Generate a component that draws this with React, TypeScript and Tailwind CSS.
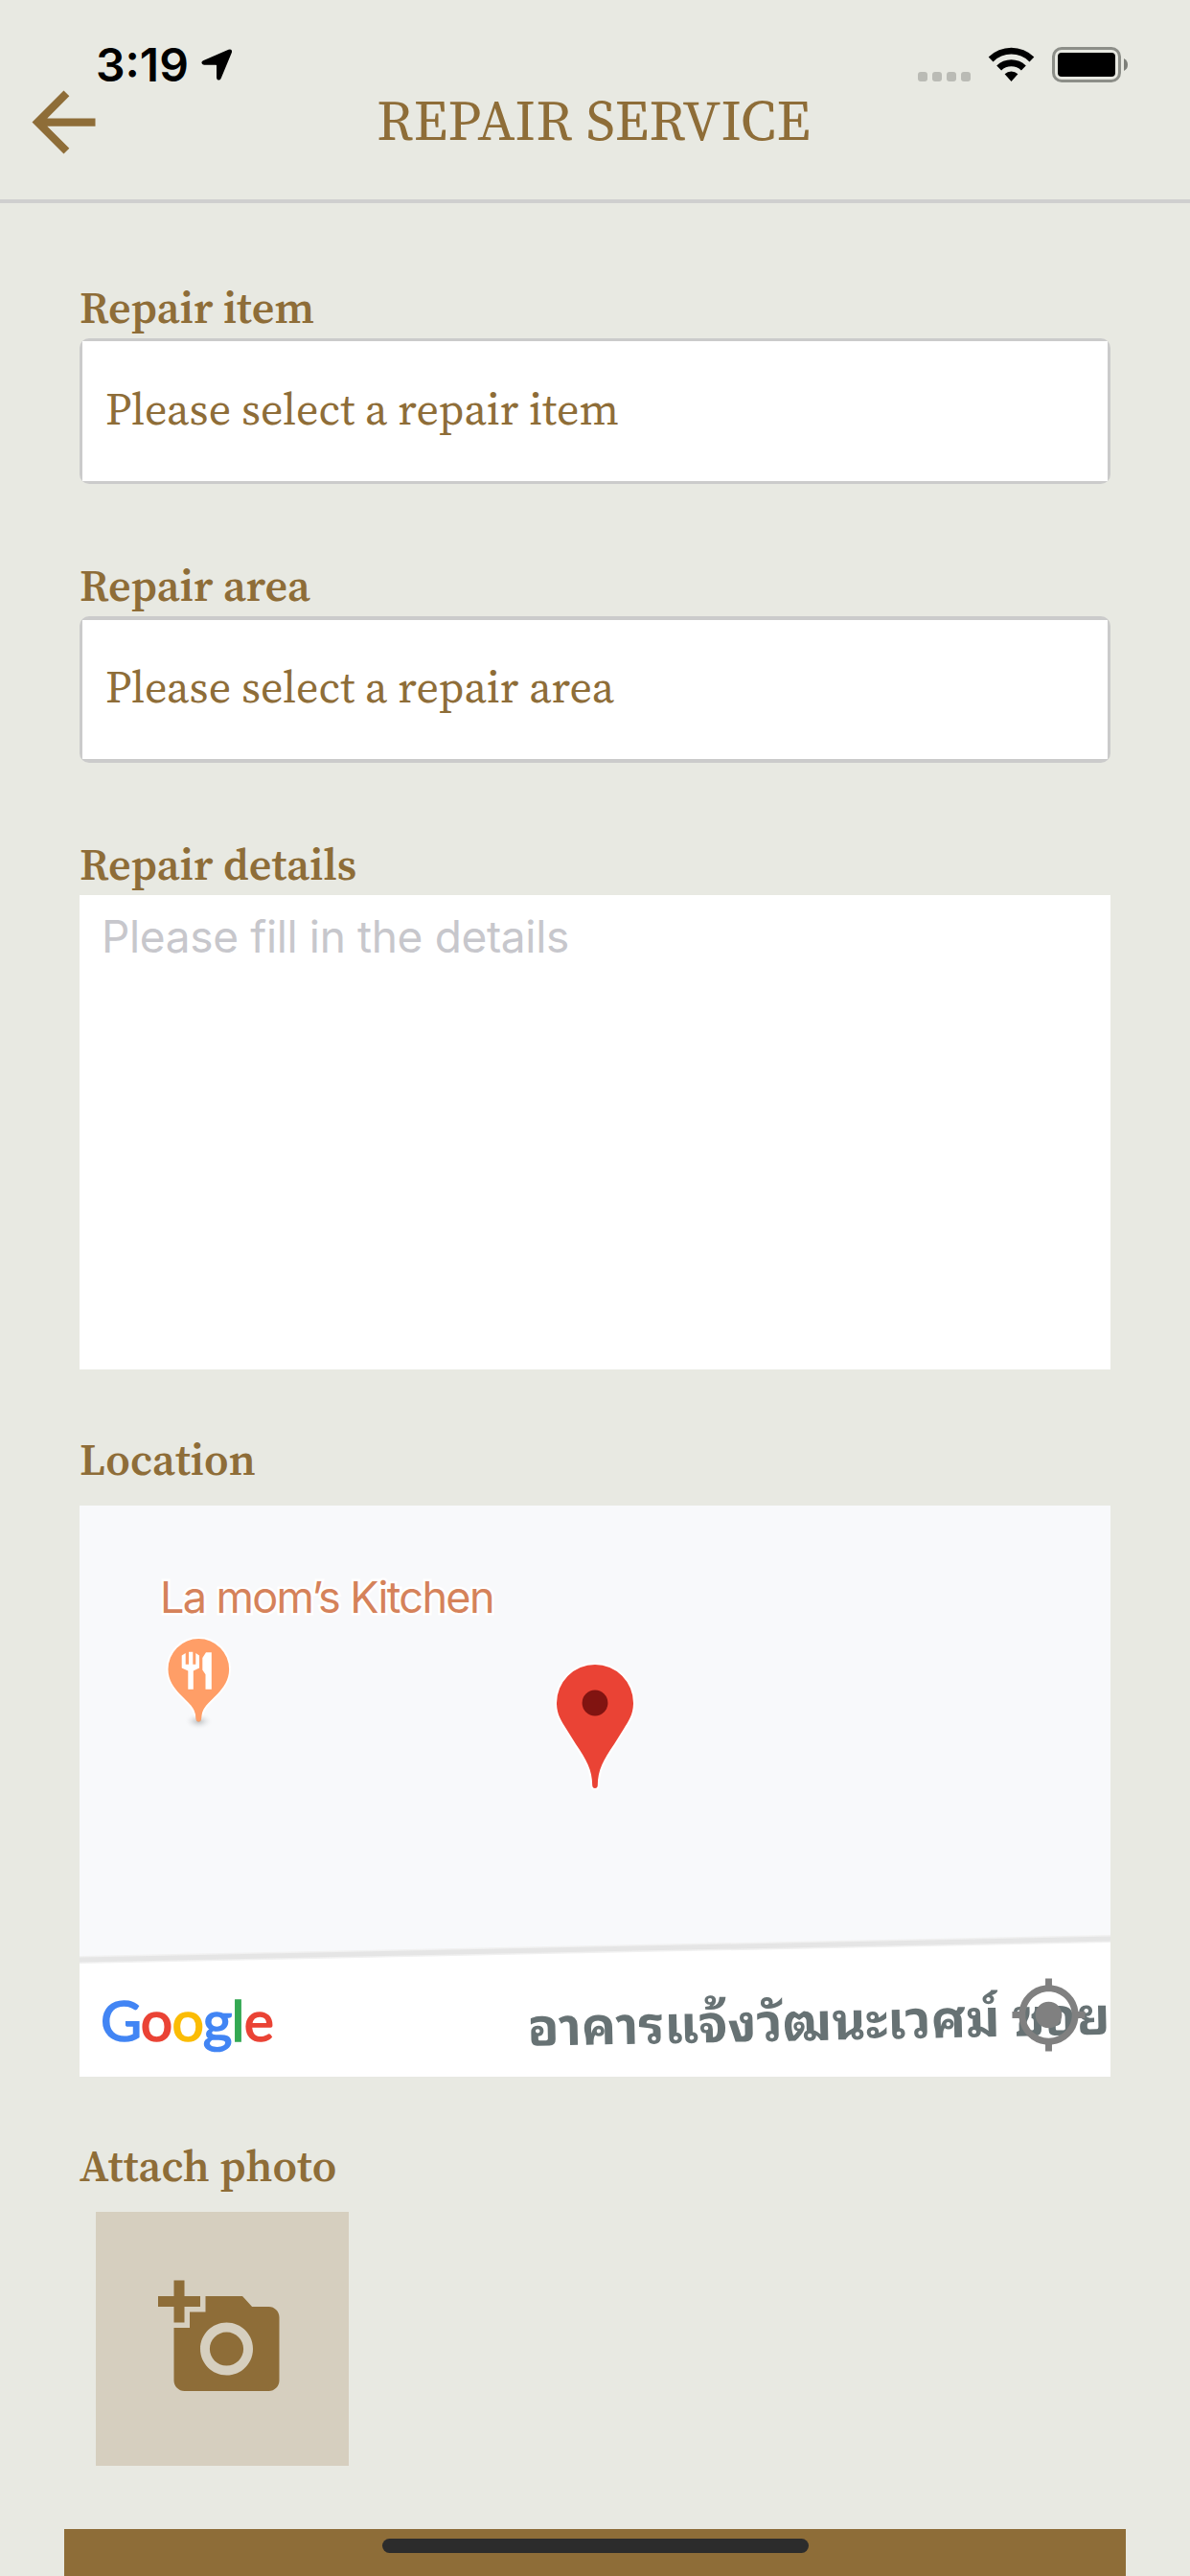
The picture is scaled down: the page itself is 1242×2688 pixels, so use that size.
import React from 'react';
import { MdAddAPhoto, MdArrowBack, MdMyLocation } from 'react-icons/md';

interface FieldLabelProps {
    children: React.ReactNode;
    className?: string;
}

const FieldLabel: React.FC<FieldLabelProps> = ({ children, className = 'h-[55px]' }) => (
    <div className={`whitespace-nowrap text-[46px] font-semibold leading-[45px] tracking-[0.1px] ${className}`}>{children}</div>
);

const SelectBox: React.FC<{ text: string; className: string; innerClassName: string }> = ({ text, className, innerClassName }) => (
    <button className={`flex w-full rounded-[10px] bg-[#cbcbcb] px-[3px] text-left ${className}`}>
        <span className={`flex w-full items-center bg-white pb-[5px] pl-[24px] ${innerClassName}`}>
            <span className="whitespace-nowrap text-[46px] leading-none tracking-[0.1px]">{text}</span>
        </span>
    </button>
);

const StatusBar = () => (
    <div className="flex h-[92px] items-start justify-between pl-[100px] pr-[65px] pt-[44px] font-['Inter',sans-serif] text-black">
        <div className="flex">
            <span className="w-[110px] text-[48px] font-semibold leading-none">3:19</span>
            <svg className="mt-[7px] h-[33px] w-[33px]" viewBox="0 0 33 33">
                <path d="M2 12.2 28.5.7Q32.8-.4 31.9 3.8L20.6 31Q19.5 33 17.5 32.4Q16 32 16 30V17.3Q16 16.7 15.4 16.7H3Q.6 16.5.4 14.6Q.3 13 2 12.2Z" />
            </svg>
        </div>
        <div className="flex pt-[5px]">
            <div className="mr-[18px] flex gap-[5px] pt-[26px]">
                {[0, 1, 2, 3].map((i) => (
                    <span key={i} className="h-[10px] w-[10px] rounded-[3px] bg-[#babbb5]" />
                ))}
            </div>
            <svg className="mr-[18px] h-[37px] w-[49px]" viewBox="0 0 49 37">
                <path d="M.7 10.5A34 34 0 0 1 48.3 10.5L43.5 15.4A27 27 0 0 0 5.5 15.4Z" />
                <path d="M9.2 19.4A21.8 21.8 0 0 1 39.8 19.4L34.9 24.5A15 15 0 0 0 14.1 24.5Z" />
                <path d="M17.6 28.2A10.5 10.5 0 0 1 31.4 28.2L24.5 36Z" />
            </svg>
            <div className="flex h-[37px] w-[72px] rounded-[10px] border-[3px] border-[#8c8e88] p-[3px]">
                <span className="w-full rounded-[4px] bg-black" />
            </div>
            <svg className="ml-[3px] mt-[12px] h-[13px] w-[4px]" viewBox="0 0 4 13">
                <path d="M0 0Q4 2 4 6.5Q4 11 0 13Z" fill="#7d7f79" />
            </svg>
        </div>
    </div>
);

const Header = () => (
    <header className="h-[212px] border-b-4 border-[#cfcfcf]">
        <StatusBar />
        <div className="-mt-[14px] grid grid-cols-[99px_1fr_99px] px-[17px]">
            <MdArrowBack className="h-[99px] w-[99px]" />
            <h1 className="mt-[18px] whitespace-nowrap pr-[3px] text-center text-[59px] leading-[60px] tracking-[0.15px]">REPAIR SERVICE</h1>
        </div>
    </header>
);

const FoodPin = () => (
    <svg className="absolute left-[83px] top-[131px] h-[108px] w-[82px]" viewBox="0 0 82 108">
        <defs>
            <radialGradient id="pin-shadow">
                <stop offset="0" stopColor="#9a9da0" />
                <stop offset="1" stopColor="#f8f9fb" stopOpacity="0" />
            </radialGradient>
        </defs>
        <g transform="translate(9.5 8)">
            <path
                d="M31.8 0A31.8 31.8 0 0 0 0 32C0 43 6 51 12 57.5C20 66 28.5 71 29 83Q29.3 86.5 31.8 86.5Q34.3 86.5 34.6 83C35.1 71 43.6 66 51.6 57.5C57.6 51 63.6 43 63.6 32A31.8 31.8 0 0 0 31.8 0Z"
                fill="#ff9e67"
                stroke="#fff"
                strokeWidth="4"
                strokeLinejoin="round"
                paintOrder="stroke"
            />
            <ellipse cx="31.8" cy="86" rx="15" ry="9" fill="url(#pin-shadow)" opacity="0.7" />
            <path d="M28 75Q29 79 29 83Q29.3 86.5 31.8 86.5Q34.3 86.5 34.6 83Q34.6 79 35.6 75Z" fill="#ff9e67" />
            <path
                d="M14.2 17.5 18.2 15V26.7H21.5V13.7H25.8V26.7H28.8V15L32.5 17.5V30.5L26.3 33.5V52.7H20.8V33.5L14.2 30.5Z"
                fill="#fff"
            />
            <path d="M39.5 14.3H45.3V52.7H39V37.2L35.8 32.5V20Z" fill="#fff" />
        </g>
    </svg>
);

const MarkerPin = () => (
    <svg className="absolute left-[494px] top-[162px] h-[137px] w-[88px]" viewBox="0 0 88 137">
        <g transform="translate(4 4)">
            <path
                d="M40 0A40 40 0 0 0 0 40C0 52 5 59 10 67L20 83C31 99 37.2 110 37.2 126Q37.4 129 40 129Q42.6 129 42.8 126C42.8 110 49 99 60 83L70 67C75 59 80 52 80 40A40 40 0 0 0 40 0Z"
                fill="#ea4335"
                stroke="#fff"
                strokeWidth="4"
                paintOrder="stroke"
            />
            <circle cx="40" cy="40" r="13.4" fill="#811411" />
        </g>
    </svg>
);

const LocationMap = () => (
    <div className="relative h-[596px] overflow-hidden bg-[#f8f9fb]">
        <svg className="absolute inset-0 h-full w-full" viewBox="0 0 1076 596">
            <path d="M-4 474Q560 461 1080 452V600H-4Z" fill="#fff" />
            <path d="M-4 474Q560 461 1080 452" fill="none" stroke="#f1f1f1" strokeWidth="8" />
            <path d="M-4 474Q560 461 1080 452" fill="none" stroke="#e5e5e5" strokeWidth="5" />
        </svg>
        <span className="absolute left-[84px] top-[73px] whitespace-nowrap font-['Inter',sans-serif] text-[45px] leading-none tracking-[-1.65px] text-[#d5825a] [paint-order:stroke] [-webkit-text-stroke:5px_white]">
            La mom’s Kitchen
        </span>
        <FoodPin />
        <MarkerPin />
        <span className="absolute left-[22px] top-[507px] whitespace-nowrap font-['Lato',sans-serif] text-[59px] leading-none tracking-[-0.9px] [-webkit-text-stroke:1.6px_currentColor]">
            <span className="text-[#4285f4]">G</span>
            <span className="text-[#ea4335]">o</span>
            <span className="text-[#fbbc05]">o</span>
            <span className="text-[#4285f4]">g</span>
            <span className="text-[#34a853]">l</span>
            <span className="text-[#ea4335]">e</span>
        </span>
        <span className="absolute left-[468px] top-[508px] origin-bottom-left -rotate-[1.15deg] whitespace-nowrap font-['Noto_Sans_Thai_Looped','Noto_Looped_Thai','Loma','Noto_Sans_Thai','Noto_Sans',sans-serif] text-[54px] font-bold leading-[64px] text-[#677274]">
            อาคารแจ้งวัฒนะเวศม์ ซอย
        </span>
        <MdMyLocation className="absolute left-[970px] top-[490px] h-[83px] w-[83px] text-[#808080]" />
    </div>
);

const App: React.FC = () => {
    return (
        <div className="flex h-[2688px] w-[1242px] flex-col overflow-hidden bg-[#e8e9e2] font-['Source_Serif_Pro','Source_Serif_4','Noto_Serif_CJK_SC','Liberation_Serif',serif] text-[#8e6d38]">
            <Header />

            <main className="flex flex-col px-[83px] pt-[86px]">
                <section className="mb-[83px]">
                    <FieldLabel>Repair item</FieldLabel>
                    <SelectBox text="Please select a repair item" className="h-[152px] py-[3px]" innerClassName="h-[146px]" />
                </section>

                <section className="mb-[83px]">
                    <FieldLabel>Repair area</FieldLabel>
                    <SelectBox text="Please select a repair area" className="h-[153px] py-[4px]" innerClassName="h-[145px]" />
                </section>

                <section className="mb-[71px]">
                    <FieldLabel>Repair details</FieldLabel>
                    <textarea
                        className="block h-[495px] w-full resize-none bg-white px-[23px] pt-[19px] font-['Inter',sans-serif] text-[46px] leading-[48px] tracking-[-0.35px] outline-none placeholder:text-[#c7c7cc]"
                        placeholder="Please fill in the details"
                    />
                </section>

                <section className="mb-[70px]">
                    <FieldLabel className="h-[71px]">Location</FieldLabel>
                    <LocationMap />
                </section>

                <section className="mb-[66px]">
                    <FieldLabel className="h-[71px]">Attach photo</FieldLabel>
                    <button className="ml-[17px] flex h-[265px] w-[264px] items-center justify-center bg-[#d6cfbf] pb-[2px] pr-[2px]">
                        <MdAddAPhoto className="h-[132px] w-[132px]" />
                    </button>
                </section>
            </main>

            <footer className="mx-[67px] flex h-[49px] justify-center bg-[#8e6d38] pt-[10px]">
                <span className="h-[15px] w-[445px] rounded-full bg-[#2c2c2c]" />
            </footer>
        </div>
    );
};

export default App;
